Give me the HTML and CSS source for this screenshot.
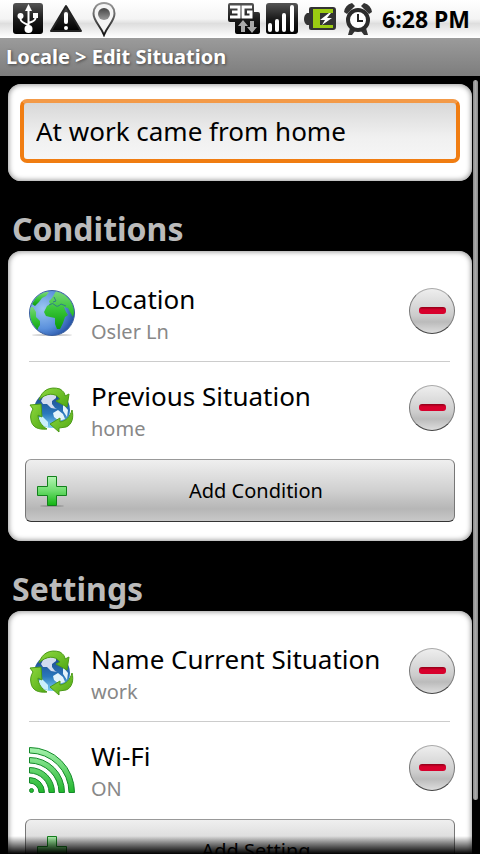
FILE: index.html
```html
<!DOCTYPE html>
<html lang="en">
<head>
  <meta charset="UTF-8">
  <meta name="viewport" content="width=device-width, initial-scale=1.0">
  <title>Locale - Edit Situation</title>
  <link rel="stylesheet" href="styles.css">
</head>
<body>
  <!-- shared icons -->
  <svg class="defs" width="0" height="0" aria-hidden="true">
    <defs>
      <linearGradient id="dark" x1="0" y1="0" x2="0" y2="1">
        <stop offset="0" stop-color="#555"/>
        <stop offset="0.5" stop-color="#1c1c1c"/>
        <stop offset="1" stop-color="#000"/>
      </linearGradient>
      <linearGradient id="pin" x1="0" y1="0" x2="0" y2="1">
        <stop offset="0" stop-color="#999"/>
        <stop offset="1" stop-color="#111"/>
      </linearGradient>
      <linearGradient id="pin-dot" x1="0" y1="0" x2="0" y2="1">
        <stop offset="0" stop-color="#444"/>
        <stop offset="1" stop-color="#999"/>
      </linearGradient>
      <linearGradient id="green" x1="0" y1="0" x2="0" y2="1">
        <stop offset="0" stop-color="#b4f5b4"/>
        <stop offset="0.5" stop-color="#6ddc6d"/>
        <stop offset="1" stop-color="#12b512"/>
      </linearGradient>
      <linearGradient id="wave" gradientUnits="userSpaceOnUse" x1="0" y1="0" x2="0" y2="46">
        <stop offset="0" stop-color="#a8f3b0"/>
        <stop offset="1" stop-color="#1fb52a"/>
      </linearGradient>
      <linearGradient id="leaf" x1="0" y1="0" x2="1" y2="1">
        <stop offset="0" stop-color="#8ed83f"/>
        <stop offset="1" stop-color="#4fa813"/>
      </linearGradient>
      <radialGradient id="sea" cx="0.3" cy="0.4" r="0.75">
        <stop offset="0" stop-color="#9cc6f2"/>
        <stop offset="0.6" stop-color="#5a90dc"/>
        <stop offset="1" stop-color="#1f4b9e"/>
      </radialGradient>
      <linearGradient id="land" x1="0" y1="0" x2="0" y2="1">
        <stop offset="0" stop-color="#7ad67c"/>
        <stop offset="0.5" stop-color="#36c436"/>
        <stop offset="1" stop-color="#0b9a0b"/>
      </linearGradient>
      <linearGradient id="ocean" x1="0" y1="0" x2="0" y2="1">
        <stop offset="0" stop-color="#1d4385"/>
        <stop offset="0.6" stop-color="#2a78bd"/>
        <stop offset="1" stop-color="#7fd0f2"/>
      </linearGradient>
      <clipPath id="round"><circle cx="23" cy="23" r="22"/></clipPath>
      <symbol id="icon-globe" viewBox="0 0 46 46">
        <ellipse cx="23" cy="45" rx="20" ry="1" fill="#ccc"/>
        <circle cx="23" cy="23" r="22.5" fill="url(#sea)" stroke="#3a5f9e"/>
        <g clip-path="url(#round)" fill="url(#land)">
          <path d="M3 14 8 6 15 2 20 2 17 6 13 8 10 12 6 16z"/>
          <path d="M0 17 4 17 7 22 7 27 11 31 11 35 9 38 9 42 0 36z"/>
          <path d="M23 8 27 1 34 2 43 9 46 20 44 27 41 22 39 18 35 17 37 22 39 25 36 27 34 33 31 39 28 39 26 34 26 28 21 27 17 26 15 22 18 16 21 14 20 11z"/>
        </g>
        <path d="M20 15q4-3 6 0t6-1l5 2M25 7l2 4-3 1" fill="none" stroke="#2f7f86"/>
      </symbol>
      <symbol id="icon-cycle" viewBox="0 0 46 46">
        <circle cx="23" cy="23" r="18" fill="url(#ocean)"/>
        <path d="M12 14 15 8 21 5 27 8 27 11 23 14 23 17 26 21 28 22 22 21 18 17 14 17z" fill="#d3dcf0"/>
        <path d="M24 26 29 23 34 27 36 32 30 34 25 30zM34 17l5 6-1 7-4-6z" fill="#e3f3fb"/>
        <path d="M9 31l4-2 6 6 0 5-8-2z" fill="#c9effb"/>
        <g fill="url(#leaf)" stroke="#4b9a17" stroke-linejoin="round">
          <path d="M10 13C13 3 21-1 31 2 34 4 36 6 36 9L40 7 38 20 27 14 31 12C26 5 17 6 10 13z"/>
          <path d="M1 18 12 17 13 30 9 28C9 34 13 39 18 42 9 43 3 40 2 33 1 29 2 25 4 22z"/>
          <path d="M43 23C45 30 43 38 37 40L30 41 30 45 21 37 31 31 31 35C37 34 41 30 43 23z"/>
        </g>
      </symbol>
      <symbol id="icon-wifi" viewBox="0 0 46 46">
        <g fill="url(#wave)" stroke="#148a2a">
          <path d="M.5.5A45 45 0 0 1 45.500 45.500H40A39.500 39.500 0 0 0 .5 6z"/>
          <path d="M.5 10.500A35 35 0 0 1 35.500 45.500H30A29.500 29.500 0 0 0 .5 16z"/>
          <path d="M.5 20.500A25 25 0 0 1 25.500 45.500H20A19.500 19.500 0 0 0 .5 26z"/>
          <path d="M.5 30.500A15 15 0 0 1 15.500 45.500H10A9.500 9.500 0 0 0 .5 36z"/>
          <circle cx="2.500" cy="43.500" r="2"/>
        </g>
      </symbol>
      <symbol id="icon-plus" viewBox="0 0 32 32">
        <ellipse cx="16" cy="31" rx="12" ry="1" fill="#999"/>
        <path d="M11.500 1.500H20.500V11.500H30.500V20.500H20.500V30.500H11.500V20.500H1.500V11.500H11.500z" fill="url(#green)" stroke="#13801c"/>
      </symbol>
    </defs>
  </svg>

  <div class="status-bar">
    <svg width="30" height="32" viewBox="0 0 30 32" role="img" aria-label="USB">
      <rect width="30" height="31" rx="3" fill="url(#dark)"/>
      <g fill="none" stroke="#fff" stroke-width="2">
        <path d="M15.500 6V26M7.500 13v3q0 3 8 6M22.500 13v2q0 3-7 5"/>
      </g>
      <path d="M15.500 1 19 8H12z" fill="#fff"/>
      <circle cx="15.500" cy="26" r="4" fill="#fff"/>
      <circle cx="7.500" cy="13" r="3" fill="#fff"/>
      <rect x="20" y="10" width="5" height="5" fill="#fff"/>
    </svg>
    <svg width="34" height="32" viewBox="0 0 34 32" role="img" aria-label="Warning">
      <path d="M17 3 32 28H2z" fill="url(#dark)" stroke="#222" stroke-width="2" stroke-linejoin="round"/>
      <path d="M17 11v8" stroke="#fff" stroke-width="4" stroke-linecap="round"/>
      <circle cx="17" cy="25" r="2" fill="#fff"/>
    </svg>
    <svg width="30" height="36" viewBox="0 0 30 36" role="img" aria-label="Location">
      <path d="M15 2C8 2 4.500 7 4.500 12.500 4.500 20 11 24 15 34 19 24 25.500 20 25.500 12.500 25.500 7 22 2 15 2z" fill="#f4f4f4" stroke="url(#pin)" stroke-width="2"/>
      <circle cx="15" cy="13" r="6" fill="url(#pin-dot)"/>
    </svg>
    <span class="spacer"></span>
    <svg width="32" height="32" viewBox="0 0 32 32" role="img" aria-label="3G">
      <path d="M2 0H24q2 0 2 2V9H30q2 0 2 2V29q0 2-2 2H9q-2 0-2-2V19H2q-2 0-2-2V2Q0 0 2 0z" fill="url(#dark)"/>
      <path d="M2 4H11V14H2M4 9H11M24 4H15V14H23V9H19" fill="none" stroke="#fff" stroke-width="3"/>
      <path d="M15 17l5 6h-3v6h-4v-6h-3zM24 30l-5-6h3v-6h4v6h3z" fill="#aaa"/>
    </svg>
    <svg width="32" height="32" viewBox="0 0 32 32" role="img" aria-label="Signal">
      <rect width="32" height="31" rx="3" fill="url(#dark)"/>
      <path d="M4 22v5M11 18v9M18 12v15M26 4v23" stroke="#fff" stroke-width="4" stroke-linecap="round"/>
    </svg>
    <svg width="32" height="32" viewBox="0 0 32 32" role="img" aria-label="Battery charging">
      <path d="M7 4H29q3 0 3 3V24q0 3-3 3H7q-2 0-2-2V22H3q-3-2-3-6t3-6H5V6q0-2 2-2z" fill="#333"/>
      <path d="M9 6H29V10H16V22H29V25H9z" fill="#9bcb12"/>
      <path d="M25 10 16 17h5l-3 5 10-7h-5l4-5z" fill="#fff"/>
    </svg>
    <svg width="32" height="32" viewBox="-2 0 32 32" role="img" aria-label="Alarm">
      <path d="M0 9Q1 2 8 0L11 3 3 11zM28 9Q27 2 20 0L17 3 25 11zM6 25l5 3-3 4H4zM22 25l-5 3 3 4h4z" fill="#333"/>
      <circle cx="14" cy="17" r="10" fill="#fff" stroke="#2b2b2b" stroke-width="4"/>
      <path d="M14 11v7h5" fill="none" stroke="#222" stroke-width="2"/>
    </svg>
    <time class="clock">6:28 PM</time>
  </div>

  <header class="title-bar">
    <h1>Locale &gt; Edit Situation</h1>
  </header>

  <div class="screen">
    <main class="scroll-area">
      <section class="card name-card">
        <input class="name-input" type="text" value="At work came from home" aria-label="Situation name">
      </section>

      <h2>Conditions</h2>
      <section class="card">
        <ul class="items">
          <li class="item">
            <svg class="item-icon" aria-hidden="true"><use href="#icon-globe"/></svg>
            <div class="item-text">
              <div class="item-name">Location</div>
              <div class="item-value">Osler Ln</div>
            </div>
            <button class="remove" type="button" aria-label="Remove Location"></button>
          </li>
          <li class="item">
            <svg class="item-icon" aria-hidden="true"><use href="#icon-cycle"/></svg>
            <div class="item-text">
              <div class="item-name">Previous Situation</div>
              <div class="item-value">home</div>
            </div>
            <button class="remove" type="button" aria-label="Remove Previous Situation"></button>
          </li>
        </ul>
        <button class="add" type="button">
          <svg class="add-icon" aria-hidden="true"><use href="#icon-plus"/></svg>
          <span>Add Condition</span>
        </button>
      </section>

      <h2>Settings</h2>
      <section class="card">
        <ul class="items">
          <li class="item">
            <svg class="item-icon" aria-hidden="true"><use href="#icon-cycle"/></svg>
            <div class="item-text">
              <div class="item-name">Name Current Situation</div>
              <div class="item-value">work</div>
            </div>
            <button class="remove" type="button" aria-label="Remove Name Current Situation"></button>
          </li>
          <li class="item">
            <svg class="item-icon" aria-hidden="true"><use href="#icon-wifi"/></svg>
            <div class="item-text">
              <div class="item-name">Wi-Fi</div>
              <div class="item-value">ON</div>
            </div>
            <button class="remove" type="button" aria-label="Remove Wi-Fi"></button>
          </li>
        </ul>
        <button class="add" type="button">
          <svg class="add-icon" aria-hidden="true"><use href="#icon-plus"/></svg>
          <span>Add Setting</span>
        </button>
      </section>
    </main>
    <div class="fade"></div>
    <div class="scroll-thumb"></div>
  </div>
</body>
</html>
```
FILE: styles.css
```css
* {
  box-sizing: border-box;
}

body {
  margin: 0;
  height: 100vh;
  display: flex;
  flex-direction: column;
  overflow: hidden;
  background-color: #000;
  font-family: "Noto Sans", "Open Sans", sans-serif;
  color: #000;
}

.defs {
  position: absolute;
}

/* Status bar */
.status-bar {
  flex: none;
  height: 38px;
  padding: 0 10px 0 13px;
  display: flex;
  align-items: center;
  gap: 6px;
  background: linear-gradient(#fff, #f4f4f4 50%, #dedede 62%, #fff);
}

.status-bar svg {
  flex: none;
}

.spacer {
  flex: 1;
}

.clock {
  margin-left: 2px;
  font-size: 23px;
  font-weight: bold;
}

/* Title bar */
.title-bar {
  flex: none;
  height: 38px;
  padding: 0 6px;
  display: flex;
  align-items: center;
  background: linear-gradient(#9b9b9b, #7d7d7d);
}

.title-bar h1 {
  margin: 0;
  font-size: 20px;
  line-height: 36px;
  color: #fff;
  text-shadow: 1px 1px 3px #444;
}

/* Scrolling content */
.screen {
  flex: 1;
  min-height: 0;
  position: relative;
}

.scroll-area {
  height: 100%;
  padding: 8px;
  overflow-y: auto;
  scrollbar-width: none;
}

.fade {
  position: absolute;
  left: 0;
  right: 0;
  bottom: 0;
  height: 18px;
  background: linear-gradient(rgba(0, 0, 0, 0), #000);
  pointer-events: none;
}

.scroll-thumb {
  position: absolute;
  top: 4px;
  right: 2px;
  width: 5px;
  bottom: 7%;
  border-radius: 3px;
  background: linear-gradient(90deg, #888, #aaa, #888);
}

h2 {
  margin: 0;
  padding: 25px 4px 0;
  font-size: 32px;
  line-height: 45px;
  color: #bbb;
}

.card {
  padding: 13px 17px 19px;
  border-radius: 13px;
  background-color: #fff;
  box-shadow: inset 0 0 5px 1px #999;
}

.name-card {
  padding: 15px 12px 18px;
}

.name-input {
  display: block;
  width: 100%;
  height: 64px;
  padding: 0 12px;
  border: 4px solid #f07d12;
  border-top-color: #f39a48;
  border-radius: 7px;
  outline: none;
  background: linear-gradient(#d8d8d8, #f0f0f0 60%, #f6f6f6);
  font-family: inherit;
  font-size: 26px;
  color: #000;
}

.items {
  margin: 0;
  padding: 0;
  list-style: none;
}

.item {
  height: 97px;
  display: flex;
  align-items: center;
  position: relative;
}

.item + .item::before {
  content: "";
  position: absolute;
  top: 0;
  left: 4px;
  right: 5px;
  height: 1px;
  background-color: #ccc;
}

.item-icon {
  flex: none;
  width: 46px;
  height: 46px;
  margin: 0 16px 0 4px;
}

.item-text {
  flex: 1;
  min-width: 0;
  padding-top: 4px;
}

.item-name {
  font-size: 26px;
  line-height: 34px;
}

.item-value {
  font-size: 20px;
  line-height: 32px;
  color: #888;
}

.remove {
  flex: none;
  width: 46px;
  height: 46px;
  margin-bottom: 4px;
  padding: 0;
  display: flex;
  align-items: center;
  justify-content: center;
  border: 1px solid #777;
  border-top-color: #aaa;
  border-bottom-color: #444;
  border-radius: 50%;
  background: linear-gradient(#eee, #ccc 60%, #bbb 75%, #ddd);
}

.remove::before {
  content: "";
  width: 27px;
  height: 7px;
  border-radius: 3px;
  background: linear-gradient(#900018, #d8002c 40%);
}

.add {
  width: 100%;
  height: 63px;
  margin-top: 1px;
  padding: 0 10px;
  display: flex;
  align-items: center;
  border: 1px solid #777;
  border-top-color: #999;
  border-bottom-color: #333;
  border-radius: 6px;
  background: linear-gradient(#efefef, #d0d0d0 50%, #b6b6b6 80%, #c8c8c8);
  font-family: inherit;
  font-size: 20px;
  color: #000;
}

.add-icon {
  flex: none;
  width: 32px;
  height: 32px;
}

.add span {
  flex: 1;
  text-align: center;
}
```
